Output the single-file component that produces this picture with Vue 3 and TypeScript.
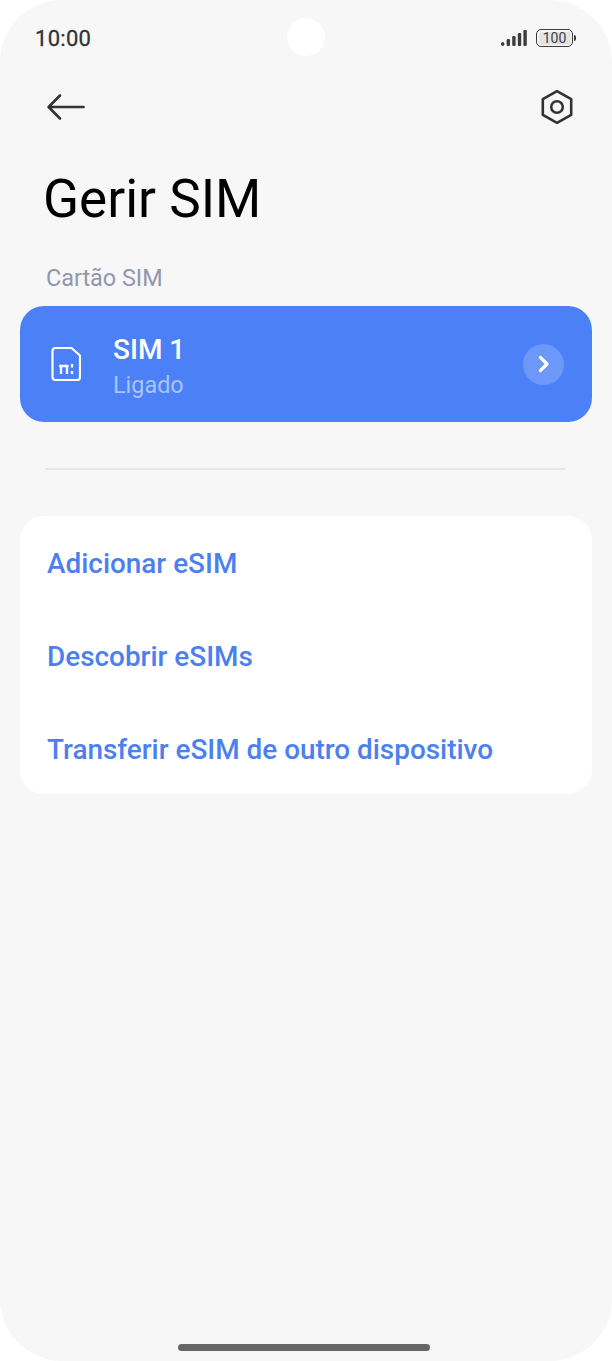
<template>
  <div class="phone">
    <div class="status-bar">
      <span class="clock">10:00</span>
      <div class="status-right">
        <svg class="signal" width="27" height="17" viewBox="0 0 27 17">
          <rect x="0" y="12" width="3.4" height="4" rx="1.7" />
          <rect x="5.6" y="9" width="3.4" height="7" rx="1.2" />
          <rect x="11.2" y="6" width="3.4" height="10" rx="1.2" />
          <rect x="16.8" y="3" width="3.4" height="13" rx="1.2" />
          <rect x="22.4" y="0" width="3.4" height="16" rx="1.2" />
        </svg>
        <div class="battery">
          <div class="battery-body"><span>100</span></div>
          <div class="battery-tip"></div>
        </div>
      </div>
      <div class="camera"></div>
    </div>

    <div class="toolbar">
      <svg width="40" height="30" viewBox="0 0 40 30" fill="none" stroke="#333" stroke-width="2.6" stroke-linecap="round" stroke-linejoin="round">
        <path d="M37.6 15H3M14 3.5 2.6 15 14 26.5" />
      </svg>
      <svg width="34" height="36" viewBox="0 0 34 36" fill="none" stroke="#333" stroke-width="2.6" stroke-linejoin="round">
        <path d="M17 2.2 31.2 10.2V25.8L17 33.8 2.8 25.8V10.2Z" />
        <circle cx="17" cy="18" r="5.8" />
      </svg>
    </div>

    <h1 class="title">Gerir SIM</h1>
    <div class="section-label">Cartão SIM</div>

    <div class="sim-card">
      <svg class="sim-icon" width="30" height="36" viewBox="0 0 30 36" fill="none" stroke="#fff" stroke-width="2.2" stroke-linejoin="round">
        <path d="M4.5 2H20.5L29 9.5V31a3 3 0 0 1-3 3H4.5a3 3 0 0 1-3-3V5a3 3 0 0 1 3-3Z" />
        <path d="M8 20H17.5M10 20V28M16 20V28M21 18V21.5M21 25V28" stroke-width="2.3" />
      </svg>
      <div class="sim-text">
        <div class="sim-name">SIM 1</div>
        <div class="sim-state">Ligado</div>
      </div>
      <div class="sim-go">
        <svg width="12" height="18" viewBox="0 0 12 18" fill="none" stroke="#fff" stroke-width="3.2" stroke-linecap="round" stroke-linejoin="round">
          <path d="M2.4 2.4 9 9 2.4 15.6" />
        </svg>
      </div>
    </div>

    <div class="divider"></div>

    <div class="actions">
      <div v-for="item in actions" :key="item" class="action">{{ item }}</div>
    </div>

    <div class="spacer"></div>
    <div class="home-bar"></div>
  </div>
</template>

<script setup lang="ts">
const actions: string[] = [
  'Adicionar eSIM',
  'Descobrir eSIMs',
  'Transferir eSIM de outro dispositivo',
]
</script>

<style>
html,
body {
  margin: 0;
  background: #fff;
}
</style>

<style scoped>
.phone {
  width: 612px;
  height: 1361px;
  box-sizing: border-box;
  background: #f7f7f7;
  border-radius: 62px;
  display: flex;
  flex-direction: column;
  font-family: Roboto, "Liberation Sans", sans-serif;
  overflow: hidden;
}

.status-bar {
  position: relative;
  height: 76px;
  flex-shrink: 0;
  display: flex;
  justify-content: space-between;
  align-items: center;
  padding: 0 35px;
  box-sizing: border-box;
}

.clock {
  font-size: 22px;
  font-weight: 400;
  color: #333;
  -webkit-text-stroke: 0.3px #333;
  letter-spacing: 0.3px;
}

.status-right {
  display: flex;
  align-items: center;
  gap: 8px;
  margin-right: 1px;
}

.signal {
  fill: #3c3c3c;
  margin-top: 1px;
}

.battery {
  display: flex;
  align-items: center;
  gap: 1px;
}

.battery-body {
  width: 37px;
  height: 18px;
  box-sizing: border-box;
  border: 1.5px solid #3c3c3c;
  border-radius: 5px;
  background: #e4e4e4;
  background-clip: content-box;
  padding: 1.5px;
  display: flex;
  align-items: center;
  justify-content: center;
}

.battery-body span {
  font-size: 14px;
  line-height: 14px;
  color: #3c3c3c;
}

.battery-tip {
  width: 2px;
  height: 6px;
  background: #3c3c3c;
  border-radius: 0 2px 2px 0;
}

.camera {
  position: absolute;
  left: 287px;
  top: 18px;
  width: 38px;
  height: 38px;
  border-radius: 50%;
  background: #fff;
}

.toolbar {
  display: flex;
  justify-content: space-between;
  align-items: center;
  height: 62px;
  padding: 0 38px 0 46px;
  flex-shrink: 0;
}

.title {
  margin: 31px 0 0 43px;
  font-size: 53px;
  line-height: 60px;
  font-weight: 400;
  color: #000;
}

.section-label {
  margin: 35px 0 0 46px;
  font-size: 23.4px;
  line-height: 28px;
  color: #9296b0;
}

.sim-card {
  margin: 14px 20px 0;
  height: 116px;
  border-radius: 24px;
  background: #4c80f6;
  display: flex;
  align-items: center;
  padding: 0 28px 0 31px;
  flex-shrink: 0;
}

.sim-icon {
  flex-shrink: 0;
}

.sim-text {
  margin-left: 32px;
  padding-top: 4px;
  flex: 1;
}

.sim-name {
  font-size: 28px;
  line-height: 32px;
  font-weight: 500;
  color: #fff;
}

.sim-state {
  font-size: 23.4px;
  line-height: 28px;
  margin-top: 5px;
  color: #a9c4fb;
}

.sim-go {
  width: 41px;
  height: 41px;
  border-radius: 50%;
  background: #6d98f9;
  display: flex;
  align-items: center;
  justify-content: center;
}

.divider {
  height: 2px;
  background: #e8e8e8;
  margin: 46px 47px 0 45px;
  flex-shrink: 0;
}

.actions {
  margin: 46px 20px 0;
  height: 278px;
  background: #fff;
  border-radius: 24px;
  box-sizing: border-box;
  padding-top: 1px;
  flex-shrink: 0;
}

.action {
  height: 93px;
  display: flex;
  align-items: center;
  padding-left: 27px;
  font-size: 27.9px;
  font-weight: 500;
  color: #4c80f0;
}

.spacer {
  flex: 1;
}

.home-bar {
  width: 252px;
  height: 7px;
  border-radius: 4px;
  background: #666;
  margin: 0 0 10px 178px;
  flex-shrink: 0;
}
</style>
